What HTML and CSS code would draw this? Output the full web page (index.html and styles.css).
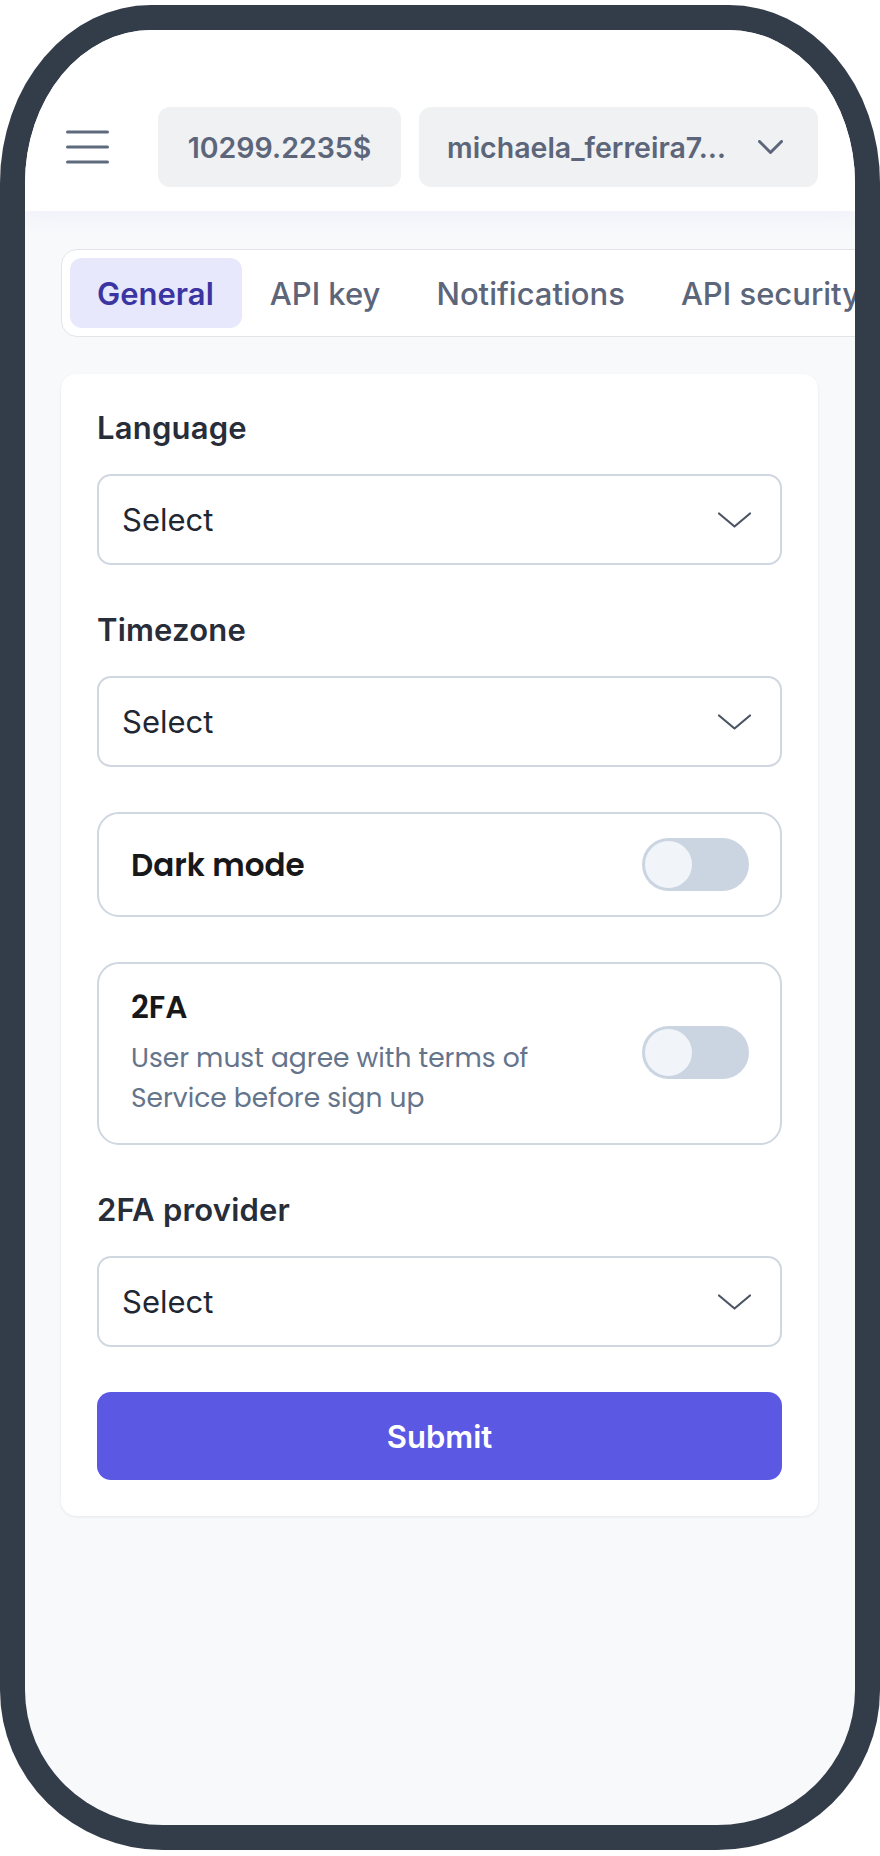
FILE: index.html
```html
<!DOCTYPE html>
<html lang="en">
<head>
<meta charset="utf-8">
<title>Settings</title>
<link rel="stylesheet" href="styles.css">
</head>
<body>
<div class="phone">
  <div class="screen">
    <header class="topbar">
      <button class="menu-btn" aria-label="Menu">
        <svg width="43" height="34" viewBox="0 0 43 34"><g stroke="#5f6a7c" stroke-width="3" stroke-linecap="round"><line x1="1.5" y1="2" x2="41.5" y2="2"/><line x1="1.5" y1="17" x2="41.5" y2="17"/><line x1="1.5" y1="32" x2="41.5" y2="32"/></g></svg>
      </button>
      <div class="pill balance">10299.2235$</div>
      <div class="pill user">
        <span class="user-name">michaela_ferreira7…</span>
        <svg width="25" height="15" viewBox="0 0 25 15"><path d="M1.5 1.5 L12.5 12.5 L23.5 1.5" fill="none" stroke="#5c6579" stroke-width="3" stroke-linecap="round" stroke-linejoin="round"/></svg>
      </div>
    </header>

    <main class="content">
      <nav class="tabs">
        <div class="tab active">General</div>
        <div class="tab">API key</div>
        <div class="tab">Notifications</div>
        <div class="tab">API security</div>
      </nav>

      <section class="card">
        <div class="field">
          <div class="label">Language</div>
          <div class="select"><span>Select</span>
            <svg width="33" height="16" viewBox="0 0 33 16"><path d="M1 1.5 L16.5 14.5 L32 1.5" fill="none" stroke="#4b5563" stroke-width="2.2" stroke-linecap="round" stroke-linejoin="round"/></svg>
          </div>
        </div>

        <div class="field">
          <div class="label">Timezone</div>
          <div class="select"><span>Select</span>
            <svg width="33" height="16" viewBox="0 0 33 16"><path d="M1 1.5 L16.5 14.5 L32 1.5" fill="none" stroke="#4b5563" stroke-width="2.2" stroke-linecap="round" stroke-linejoin="round"/></svg>
          </div>
        </div>

        <div class="switch-box single">
          <div class="switch-title">Dark mode</div>
          <div class="toggle"><div class="knob"></div></div>
        </div>

        <div class="switch-box">
          <div class="switch-text">
            <div class="switch-title">2FA</div>
            <div class="switch-desc">User must agree with terms of<br>Service before sign up</div>
          </div>
          <div class="toggle"><div class="knob"></div></div>
        </div>

        <div class="field">
          <div class="label">2FA provider</div>
          <div class="select"><span>Select</span>
            <svg width="33" height="16" viewBox="0 0 33 16"><path d="M1 1.5 L16.5 14.5 L32 1.5" fill="none" stroke="#4b5563" stroke-width="2.2" stroke-linecap="round" stroke-linejoin="round"/></svg>
          </div>
        </div>

        <button class="submit">Submit</button>
      </section>
    </main>
  </div>
</div>
</body>
</html>
```

FILE: styles.css
```css
* { box-sizing: border-box; }
html, body { margin: 0; padding: 0; background: #ffffff; }
body { font-family: Inter, "Liberation Sans", sans-serif; }

.phone {
  width: 880px;
  height: 1845px;
  margin-top: 5px;
  padding: 25px;
  background: #333c49;
  border-radius: 151px 151px 163px 163px / 178px 178px 160px 160px;
}

.screen {
  height: 100%;
  background: #f8f9fb;
  border-radius: 126px 126px 138px 138px / 153px 153px 135px 135px;
  overflow: hidden;
}

.topbar {
  display: flex;
  align-items: center;
  height: 181px;
  padding: 77px 37px 24px 41px;
  background: #ffffff;
  box-shadow: 0 6px 22px rgba(79, 70, 229, 0.05);
  position: relative;
}

.menu-btn {
  display: flex;
  padding: 0;
  border: 0;
  background: none;
  margin-right: 49px;
}

.pill {
  height: 80px;
  border-radius: 12px;
  background: #eff1f3;
  color: #5c6579;
  font-size: 28.5px;
  font-weight: 600;
  display: flex;
  align-items: center;
}

.balance {
  flex: none;
  width: 243px;
  justify-content: center;
}

.user {
  flex: 1;
  margin-left: 18px;
  padding: 0 35px 0 28px;
  justify-content: space-between;
}

.user-name { white-space: nowrap; }

.content {
  padding: 38px 37px 0 36px;
}

.tabs {
  display: flex;
  margin-right: -80px;
  padding: 8px;
  background: #ffffff;
  border: 1.5px solid #e2e4e9;
  border-radius: 16px;
  margin-bottom: 37px;
}

.tab {
  flex: none;
  height: 70px;
  padding: 0 28px;
  display: flex;
  align-items: center;
  font-size: 31px;
  font-weight: 500;
  color: #5c6579;
  white-space: nowrap;
  border-radius: 12px;
}

.tab.active {
  background: #e7e8fc;
  color: #3b35a2;
  font-weight: 600;
  padding: 0 28px 0 27px;
}

.card {
  background: #ffffff;
  border-radius: 15px;
  box-shadow: 0 1px 3px rgba(15, 23, 42, 0.08);
  padding: 34px 36px 36px;
  display: flex;
  flex-direction: column;
  gap: 45px;
}

.field {
  display: flex;
  flex-direction: column;
  gap: 26px;
}

.label {
  font-size: 31px;
  line-height: 40px;
  font-weight: 600;
  letter-spacing: 0.2px;
  color: #272d39;
}

.select {
  height: 91px;
  border: 2px solid #d0d7e1;
  border-radius: 14px;
  padding: 0 29px 0 23px;
  display: flex;
  align-items: center;
  justify-content: space-between;
  font-size: 31px;
  color: #1f2733;
}

.switch-box {
  border: 2px solid #d0d7e1;
  border-radius: 22px;
  padding: 23px 31px 25px 32px;
  display: flex;
  align-items: center;
  justify-content: space-between;
}

.switch-box.single {
  height: 105px;
  padding-top: 0;
  padding-bottom: 0;
}

.switch-title {
  font-family: Poppins, "Open Sans", sans-serif;
  font-size: 31px;
  line-height: 40px;
  font-weight: 600;
  color: #18181b;
}

.switch-desc {
  margin-top: 11px;
  font-family: Poppins, "Open Sans", sans-serif;
  font-size: 26.5px;
  line-height: 40px;
  color: #64748b;
}

.toggle {
  flex: none;
  width: 107px;
  height: 53px;
  border-radius: 27px;
  background: #cbd5e1;
  padding: 3px;
  display: flex;
}

.knob {
  width: 47px;
  height: 47px;
  border-radius: 50%;
  background: #f1f5f9;
}

.submit {
  height: 88px;
  border: 0;
  border-radius: 14px;
  background: #5b59e3;
  color: #ffffff;
  font-family: Inter, "Liberation Sans", sans-serif;
  font-size: 31px;
  font-weight: 600;
}
```
